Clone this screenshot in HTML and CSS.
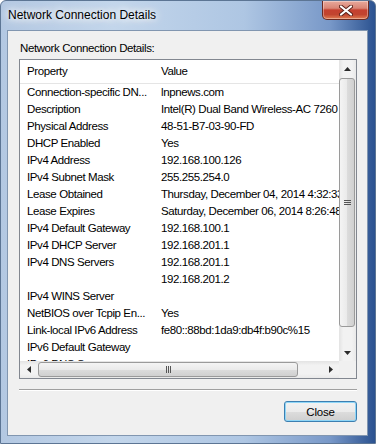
FILE: index.html
```html
<!DOCTYPE html>
<html lang="en">
<head>
    <meta charset="UTF-8">
    <title>Network Connection Details</title>
    <link rel="stylesheet" href="styles.css">
</head>
<body>

    <div class="window">
        <div class="titlebar">
            <span class="title">Network Connection Details</span>
            <button class="close-btn" aria-label="Close">
                <svg width="14" height="11" viewBox="0 0 14 11">
                    <path d="M2 1.5 L12 9.5 M12 1.5 L2 9.5" stroke="#5a2018" stroke-width="4" stroke-linecap="round"/>
                    <path d="M2 1.5 L12 9.5 M12 1.5 L2 9.5" stroke="#fff" stroke-width="2.2" stroke-linecap="round"/>
                </svg>
            </button>
        </div>

        <div class="panel">
            <div class="caption">Network Connection Details:</div>

            <div class="listview">
                <div class="viewport">
                    <div class="row header">
                        <span class="col-prop">Property</span>
                        <span class="col-val">Value</span>
                    </div>
                    <div class="row"><span class="col-prop">Connection-specific DN...</span><span class="col-val">lnpnews.com</span></div>
                    <div class="row"><span class="col-prop">Description</span><span class="col-val">Intel(R) Dual Band Wireless-AC 7260</span></div>
                    <div class="row"><span class="col-prop">Physical Address</span><span class="col-val">48-51-B7-03-90-FD</span></div>
                    <div class="row"><span class="col-prop">DHCP Enabled</span><span class="col-val">Yes</span></div>
                    <div class="row"><span class="col-prop">IPv4 Address</span><span class="col-val">192.168.100.126</span></div>
                    <div class="row"><span class="col-prop">IPv4 Subnet Mask</span><span class="col-val">255.255.254.0</span></div>
                    <div class="row"><span class="col-prop">Lease Obtained</span><span class="col-val">Thursday, December 04, 2014 4:32:33 PM</span></div>
                    <div class="row"><span class="col-prop">Lease Expires</span><span class="col-val">Saturday, December 06, 2014 8:26:48 PM</span></div>
                    <div class="row"><span class="col-prop">IPv4 Default Gateway</span><span class="col-val">192.168.100.1</span></div>
                    <div class="row"><span class="col-prop">IPv4 DHCP Server</span><span class="col-val">192.168.201.1</span></div>
                    <div class="row"><span class="col-prop">IPv4 DNS Servers</span><span class="col-val">192.168.201.1</span></div>
                    <div class="row"><span class="col-prop"></span><span class="col-val">192.168.201.2</span></div>
                    <div class="row"><span class="col-prop">IPv4 WINS Server</span><span class="col-val"></span></div>
                    <div class="row"><span class="col-prop">NetBIOS over Tcpip En...</span><span class="col-val">Yes</span></div>
                    <div class="row"><span class="col-prop">Link-local IPv6 Address</span><span class="col-val">fe80::88bd:1da9:db4f:b90c%15</span></div>
                    <div class="row"><span class="col-prop">IPv6 Default Gateway</span><span class="col-val"></span></div>
                    <div class="row"><span class="col-prop">IPv6 DNS Server</span><span class="col-val"></span></div>
                </div>

                <div class="vscroll">
                    <div class="arrow-box">
                        <svg width="7" height="4" viewBox="0 0 7 4"><path d="M0 4 L3.5 0 L7 4 Z" fill="#2b2b2b"/></svg>
                    </div>
                    <div class="track">
                        <div class="thumb">
                            <span class="grip"></span>
                        </div>
                    </div>
                    <div class="arrow-box">
                        <svg width="7" height="4" viewBox="0 0 7 4"><path d="M0 0 L3.5 4 L7 0 Z" fill="#2b2b2b"/></svg>
                    </div>
                </div>

                <div class="hscroll">
                    <div class="arrow-box">
                        <svg width="4" height="7" viewBox="0 0 4 7"><path d="M4 0 L0 3.5 L4 7 Z" fill="#2b2b2b"/></svg>
                    </div>
                    <div class="track">
                        <div class="thumb">
                            <span class="grip"></span>
                        </div>
                    </div>
                    <div class="arrow-box">
                        <svg width="4" height="7" viewBox="0 0 4 7"><path d="M0 0 L4 3.5 L0 7 Z" fill="#2b2b2b"/></svg>
                    </div>
                </div>

                <div class="corner"></div>
            </div>

            <div class="separator"></div>

            <div class="actions">
                <button class="button default">Close</button>
            </div>
        </div>
    </div>

</body>
</html>
```

FILE: styles.css
```css
body {
    margin: 0;
    background-color: #fff;
    font-family: 'Liberation Sans', Arial, sans-serif;
}

.window {
    width: 376px;
    height: 444px;
    box-sizing: border-box;
    display: flex;
    flex-direction: column;
    padding: 0 7px 7px 6px;
    border: 1px solid #5c7594;
    border-radius: 6px 6px 0 0;
    background: linear-gradient(to right, #b3c8e2 0%, #c3d6eb 30%, #aec6e3 65%, #7898c8 88%, #2b5290 100%);
}

/* Title bar */
.titlebar {
    height: 29px;
    display: flex;
    justify-content: space-between;
    align-items: flex-start;
    padding-left: 1px;
}

.title {
    margin-top: 7px;
    font-size: 12px;
    line-height: 15px;
    color: #000;
    text-shadow: 0 0 6px #fff, 0 0 10px #fff, 0 0 14px #fff;
}

.close-btn {
    width: 47px;
    height: 19px;
    margin: 0 -1px 0 0;
    padding: 0;
    display: flex;
    align-items: center;
    justify-content: center;
    border: 1px solid #6b2a22;
    border-top: none;
    border-radius: 0 0 5px 5px;
    background: linear-gradient(#e8a99c 0%, #d98575 40%, #c5402f 50%, #c1442f 75%, #e07d52 100%);
    box-shadow: inset 0 0 0 1px rgba(255, 255, 255, 0.35);
}

/* Client area */
.panel {
    flex: 1;
    display: flex;
    flex-direction: column;
    padding: 9px 10px 0 11px;
    border: 1px solid #8196b0;
    background-color: #f0f0f0;
    font-size: 11.5px;
    letter-spacing: -0.4px;
    color: #000;
}

.caption {
    line-height: 16px;
    padding-left: 1px;
    margin-bottom: 3px;
}

/* List view */
.listview {
    height: 320px;
    box-sizing: border-box;
    display: grid;
    grid-template-columns: 1fr 17px;
    grid-template-rows: 1fr 17px;
    border: 1px solid #828790;
    background-color: #fff;
}

.viewport {
    overflow: hidden;
    white-space: nowrap;
}

.row {
    display: flex;
    height: 17px;
    line-height: 17px;
}

.row.header {
    height: 24px;
    line-height: 23px;
    box-sizing: border-box;
    border-bottom: 1px solid #e5e5e5;
}

.col-prop {
    width: 127px;
    flex-shrink: 0;
    padding-left: 7px;
    overflow: hidden;
}

.col-val {
    padding-left: 7px;
}

/* Scroll bars */
.vscroll,
.hscroll {
    display: flex;
    background: #ececec;
}

.vscroll {
    flex-direction: column;
    background: linear-gradient(to right, #e3e3e3 0%, #f2f2f2 25%, #f2f2f2 75%, #e9e9e9 100%);
}

.hscroll {
    background: linear-gradient(#e3e3e3 0%, #f2f2f2 25%, #f2f2f2 75%, #e9e9e9 100%);
}

.arrow-box {
    width: 17px;
    height: 17px;
    flex-shrink: 0;
    display: flex;
    align-items: center;
    justify-content: center;
}

.track {
    flex: 1;
    display: flex;
}

.vscroll .track {
    flex-direction: column;
    padding: 1px 1px 0 0;
}

.hscroll .track {
    padding: 1px 0 0 1px;
}

.thumb {
    box-sizing: border-box;
    display: flex;
    align-items: center;
    justify-content: center;
    border: 1px solid #9a9a9a;
    border-radius: 3px;
}

.vscroll .thumb {
    height: 249px;
    background: linear-gradient(to right, #f4f4f4 0%, #eaeaea 50%, #dcdcdc 51%, #d0d0d0 100%);
}

.hscroll .thumb {
    width: 260px;
    height: 15px;
    background: linear-gradient(#f4f4f4 0%, #eaeaea 50%, #dcdcdc 51%, #d0d0d0 100%);
}

.vscroll .grip {
    width: 7px;
    height: 5px;
    background: repeating-linear-gradient(#555 0 1px, transparent 1px 2px);
}

.hscroll .grip {
    width: 5px;
    height: 7px;
    background: repeating-linear-gradient(to right, #555 0 1px, transparent 1px 2px);
}

.corner {
    background-color: #f0f0f0;
}

/* Bottom */
.separator {
    height: 1px;
    margin-top: 10px;
    border-top: 1px solid #a0a0a0;
    border-bottom: 1px solid #fff;
    height: 0;
}

.actions {
    display: flex;
    justify-content: flex-end;
    margin-top: 10px;
}

.button {
    width: 73px;
    height: 21px;
    padding: 0;
    border: 1px solid #707070;
    border-radius: 3px;
    font-family: 'Liberation Sans', Arial, sans-serif;
    font-size: 11.5px;
    letter-spacing: -0.2px;
    color: #000;
    background: linear-gradient(#f2f2f2 0%, #ebebeb 50%, #dddddd 51%, #cfcfcf 100%);
}

.button.default {
    border-color: #3c7fb1;
    box-shadow: inset 0 0 0 1px #8fd6f7;
}
```
